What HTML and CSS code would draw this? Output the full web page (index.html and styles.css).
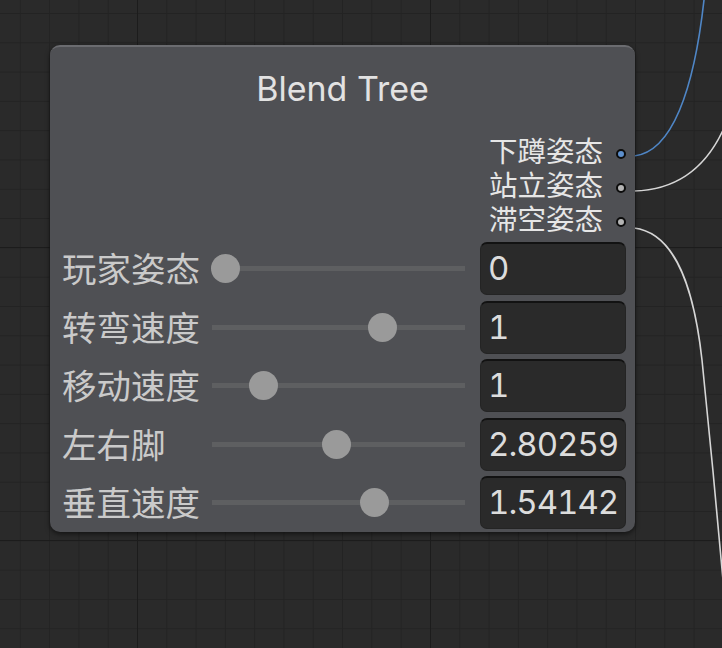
FILE: index.html
```html
<!DOCTYPE html>
<html lang="zh">
<head>
<meta charset="utf-8">
<title>Blend Tree</title>
<link rel="stylesheet" href="styles.css">
</head>
<body>
<div class="canvas">
  <svg class="wires" width="722" height="648" viewBox="0 0 722 648">
    <path d="M634 156 C 672 152, 694 90, 704 0" stroke="#4f86c6" />
    <path d="M634 191 C 676 190, 706 168, 724 128" stroke="#d6d6d6" />
    <path d="M634 228 C 668 232, 692 270, 702 360 C 710 440, 716 500, 723 580" stroke="#d6d6d6" />
  </svg>

  <div class="node">
    <div class="title">Blend Tree</div>

    <div class="outputs">
      <div class="out-row"><span class="out-label">下蹲姿态</span><span class="port port-blue"></span></div>
      <div class="out-row"><span class="out-label">站立姿态</span><span class="port"></span></div>
      <div class="out-row"><span class="out-label">滞空姿态</span><span class="port"></span></div>
    </div>

    <div class="params">
      <div class="param">
        <span class="param-label">玩家姿态</span>
        <div class="slider"><div class="track"></div><div class="thumb" style="left:0px"></div></div>
        <div class="value">0</div>
      </div>
      <div class="param">
        <span class="param-label">转弯速度</span>
        <div class="slider"><div class="track"></div><div class="thumb" style="left:157px"></div></div>
        <div class="value">1</div>
      </div>
      <div class="param">
        <span class="param-label">移动速度</span>
        <div class="slider"><div class="track"></div><div class="thumb" style="left:38px"></div></div>
        <div class="value">1</div>
      </div>
      <div class="param">
        <span class="param-label">左右脚</span>
        <div class="slider"><div class="track"></div><div class="thumb" style="left:111px"></div></div>
        <div class="value">2.80259</div>
      </div>
      <div class="param">
        <span class="param-label">垂直速度</span>
        <div class="slider"><div class="track"></div><div class="thumb" style="left:149px"></div></div>
        <div class="value">1.54142</div>
      </div>
    </div>
  </div>
</div>
</body>
</html>
```

FILE: styles.css
```css
html, body {
  margin: 0;
  padding: 0;
}

body {
  width: 722px;
  height: 648px;
  overflow: hidden;
  font-family: Inter, "Noto Sans CJK SC", sans-serif;
}

.canvas {
  position: relative;
  width: 722px;
  height: 648px;
  background-color: #2a2a2a;
  background-image:
    linear-gradient(to right, #1c1c1c 1px, transparent 1px),
    linear-gradient(to bottom, #1c1c1c 1px, transparent 1px),
    linear-gradient(to right, #232323 1px, transparent 1px),
    linear-gradient(to bottom, #232323 1px, transparent 1px);
  background-size: 293px 293px, 293px 293px, 29.3px 29.3px, 29.3px 29.3px;
  background-position: 137px 0, 0 247px, 19.8px 0, 0 13px;
}

.wires {
  position: absolute;
  left: 0;
  top: 0;
}

.wires path {
  fill: none;
  stroke-width: 1.6;
}

.node {
  position: absolute;
  left: 50px;
  top: 45px;
  width: 585px;
  height: 487px;
  box-sizing: border-box;
  background: #4f5054;
  border-top: 2px solid #6b6c70;
  border-radius: 10px;
  box-shadow: 0 2px 5px rgba(0, 0, 0, 0.55);
  display: flex;
  flex-direction: column;
}

.title {
  padding: 24px 0 28px;
  height: 36px;
  line-height: 36px;
  font-size: 34px;
  text-align: center;
  color: #e2e2e2;
  font-family: Inter, sans-serif;
}

.outputs {
  display: flex;
  flex-direction: column;
}

.out-row {
  height: 34px;
  display: flex;
  align-items: center;
  justify-content: flex-end;
  padding-right: 9px;
}

.out-label {
  font-family: "Noto Sans CJK SC", sans-serif;
  font-size: 28.5px;
  line-height: 34px;
  height: 34px;
  color: #e6e6e6;
  margin-right: 13px;
  position: relative;
  top: -2px;
}

.port {
  width: 10px;
  height: 10px;
  box-sizing: border-box;
  border: 2.5px solid #0c0c0c;
  border-radius: 50%;
  background: #b4b4b4;
  position: relative;
  top: 2px;
}

.port-blue {
  background: #5d8fcc;
}

.params {
  margin-top: 5px;
  display: flex;
  flex-direction: column;
  gap: 5.5px;
  padding: 0 9px 0 12px;
}

.param {
  height: 53px;
  display: grid;
  grid-template-columns: 149px 254px 1fr;
  align-items: center;
}

.param-label {
  font-family: "Noto Sans CJK SC", sans-serif;
  font-size: 34.5px;
  line-height: 53px;
  height: 53px;
  color: #cacaca;
  white-space: nowrap;
  position: relative;
  top: -1px;
}

.slider {
  position: relative;
  height: 29px;
}

.track {
  position: absolute;
  left: 1px;
  right: 0;
  top: 12px;
  height: 5px;
  background: #5e5f61;
}

.thumb {
  position: absolute;
  top: 0;
  width: 29px;
  height: 29px;
  border-radius: 50%;
  background: #9a9a9a;
}

.value {
  margin-left: 15px;
  height: 53px;
  box-sizing: border-box;
  background: #2a2a2a;
  border: 1px solid #242424;
  border-top: 2px solid #121212;
  border-radius: 7px;
  padding-left: 7px;
  font-family: Inter, sans-serif;
  font-size: 33px;
  font-variant-numeric: tabular-nums;
  letter-spacing: -1px;
  line-height: 48px;
  color: #dcdcdc;
  overflow: hidden;
  white-space: nowrap;
}
```
